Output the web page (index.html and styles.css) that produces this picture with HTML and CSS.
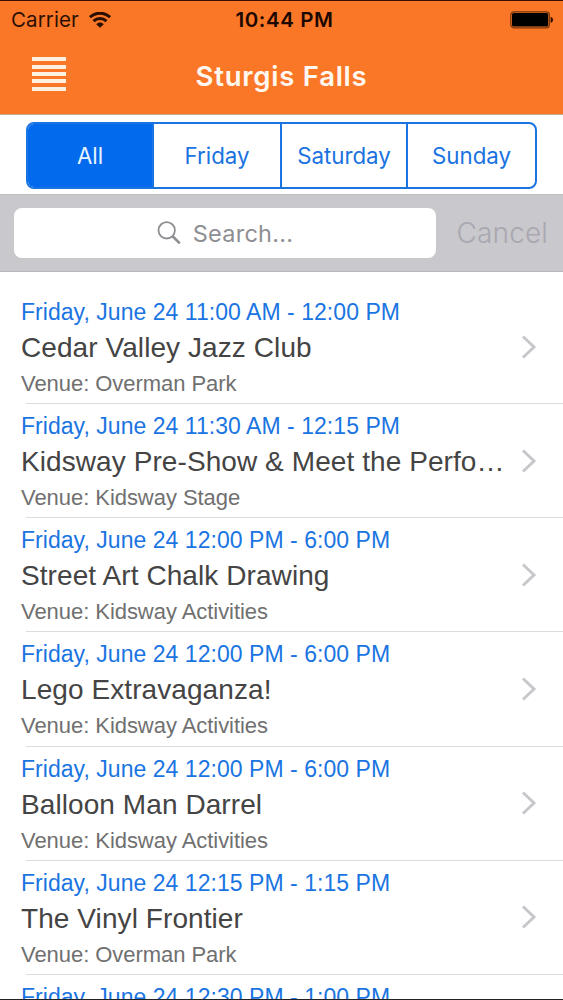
FILE: index.html
```html
<!DOCTYPE html>
<html lang="en">
<head>
    <meta charset="UTF-8">
    <meta name="viewport" content="width=device-width, initial-scale=1.0">
    <title>Sturgis Falls</title>
    <link rel="stylesheet" href="styles.css">
</head>
<body>
    <div class="screen">
        <header class="header">
            <div class="status-bar">
                <div class="carrier">
                    <span class="carrier-name">Carrier</span>
                    <svg class="wifi" width="22" height="16" viewBox="0 0 22 16" fill="none" stroke="#2b0f00" stroke-width="3">
                        <path d="M1 5.2C6.8 -0.2 15.2 -0.2 21 5.2"/>
                        <path d="M4.5 9.2C8.3 5.7 13.7 5.7 17.5 9.2"/>
                        <path d="M11 15.8L7.2 12.2C9.4 10 12.6 10 14.8 12.2Z" fill="#2b0f00" stroke="none"/>
                    </svg>
                </div>
                <span class="time">10:44 PM</span>
                <svg class="battery" width="44" height="18" viewBox="0 0 44 18">
                    <rect x="0.8" y="0.8" width="38.6" height="16" rx="3" fill="none" stroke="#7a3608" stroke-width="1.2"/>
                    <rect x="2" y="2" width="36.2" height="13.6" rx="1.5" fill="#000"/>
                    <path d="M40.6 6C43.8 6.2 43.8 11.6 40.6 11.8Z" fill="#2b0f00"/>
                </svg>
            </div>
            <div class="nav-bar">
                <button class="menu" aria-label="Menu">
                    <span></span><span></span><span></span><span></span><span></span>
                </button>
                <h1>Sturgis Falls</h1>
            </div>
        </header>

        <div class="tabs">
            <button class="tab active">All</button>
            <button class="tab">Friday</button>
            <button class="tab">Saturday</button>
            <button class="tab">Sunday</button>
        </div>

        <div class="search-bar">
            <div class="search-box">
                <svg width="24" height="24" viewBox="0 0 24 24" fill="none" stroke="#8e8e93">
                    <circle cx="9.7" cy="9.3" r="8.2" stroke-width="1.8"/>
                    <path d="M15.6 15.3L22.8 22.4" stroke-width="2.7"/>
                </svg>
                <span class="placeholder">Search...</span>
            </div>
            <span class="cancel">Cancel</span>
        </div>

        <ul class="events" id="events"></ul>
    </div>

    <script src="events.js"></script>
</body>
</html>
```
FILE: styles.css
```css
* {
    margin: 0;
    padding: 0;
    box-sizing: border-box;
}

body {
    background: #fff;
    font-family: Inter, "Liberation Sans", sans-serif;
}

button {
    background: none;
    border: none;
    font-family: inherit;
}

.screen {
    height: 1000px;
    overflow: hidden;
    border-top: 1px solid #3a0d05;
    border-bottom: 1px solid #222;
}

/* header */
.header {
    height: 114px;
    background: #fb7728;
    border-bottom: 1px solid #c9a48c;
}

.status-bar {
    display: grid;
    grid-template-columns: 1fr auto 1fr;
    align-items: center;
    height: 37px;
    padding: 0 9px 0 11px;
    color: #2b0f00;
}

.carrier {
    display: flex;
    align-items: center;
    gap: 10px;
}

.carrier-name {
    font-size: 20.5px;
    letter-spacing: 0.1px;
}

.time {
    font-size: 20.5px;
    font-weight: 600;
    letter-spacing: 0.6px;
    color: #1c0800;
    padding-left: 4px;
}

.battery {
    justify-self: end;
}

.nav-bar {
    display: grid;
    grid-template-columns: 66px 1fr 66px;
    align-items: center;
    height: 75px;
}

.menu {
    display: flex;
    flex-direction: column;
    gap: 3.3px;
    width: 34px;
    margin: -3px 0 0 32px;
}

.menu span {
    height: 4px;
    background: #fff1e2;
}

h1 {
    font-size: 27.5px;
    font-weight: 600;
    letter-spacing: 0.75px;
    color: #fff8f0;
    text-align: center;
}

/* day filter */
.tabs {
    display: grid;
    grid-template-columns: 124px 128px 126px 1fr;
    height: 67px;
    margin: 7px 26px 5px;
    border: 2px solid #1a75e2;
    border-radius: 8px;
    overflow: hidden;
}

.tab {
    font-size: 22.3px;
    color: #1a73e0;
    border-left: 2px solid #1a75e2;
}

.tab.active {
    background: #026aec;
    color: #e8f4ff;
    border-left: none;
}

/* search */
.search-bar {
    display: flex;
    align-items: center;
    height: 78px;
    padding: 0 15px 0 14px;
    background: #c9c8cd;
    border-top: 1px solid #c0bfc3;
    border-bottom: 1px solid #b9b8bc;
}

.search-box {
    display: flex;
    align-items: center;
    justify-content: center;
    gap: 12px;
    width: 422px;
    height: 50px;
    background: #fff;
    border-radius: 8px;
}

.placeholder {
    font-size: 23.5px;
    letter-spacing: 0.25px;
    color: #8e8e93;
}

.cancel {
    margin-left: auto;
    font-size: 28px;
    font-weight: 300;
    letter-spacing: 0.15px;
    color: #a9a7b0;
}

/* event list */
.events {
    list-style: none;
    margin-top: 18px;
    font-family: "Liberation Sans", Arial, sans-serif;
}

.event {
    display: grid;
    grid-template-columns: 1fr 16px;
    align-items: center;
    height: 114.15px;
    margin-left: 26px;
    padding-right: 26px;
    border-bottom: 1.5px solid #dcdcde;
}

.event-info {
    width: 486px;
    margin-left: -5px;
    padding-top: 3px;
}

.event-date,
.event-title,
.event-venue {
    display: block;
    white-space: nowrap;
}

.event-date {
    font-size: 23px;
    line-height: 34px;
    letter-spacing: 0.04px;
    color: #1a75e2;
}

.event-title {
    font-size: 28px;
    line-height: 38px;
    letter-spacing: 0.08px;
    color: #444;
    overflow: hidden;
    text-overflow: ellipsis;
}

.event-venue {
    font-size: 22px;
    line-height: 34px;
    letter-spacing: -0.05px;
    color: #707070;
}
```
FILE: events.js
```javascript
const events = [
    { date: "Friday, June 24 11:00 AM - 12:00 PM", title: "Cedar Valley Jazz Club", venue: "Overman Park" },
    { date: "Friday, June 24 11:30 AM - 12:15 PM", title: "Kidsway Pre-Show & Meet the Perfo…", venue: "Kidsway Stage" },
    { date: "Friday, June 24 12:00 PM - 6:00 PM", title: "Street Art Chalk Drawing", venue: "Kidsway Activities" },
    { date: "Friday, June 24 12:00 PM - 6:00 PM", title: "Lego Extravaganza!", venue: "Kidsway Activities" },
    { date: "Friday, June 24 12:00 PM - 6:00 PM", title: "Balloon Man Darrel", venue: "Kidsway Activities" },
    { date: "Friday, June 24 12:15 PM - 1:15 PM", title: "The Vinyl Frontier", venue: "Overman Park" },
    { date: "Friday, June 24 12:30 PM - 1:00 PM", title: "", venue: "" }
];

const list = document.getElementById("events");

events.forEach((event) => {
    const item = document.createElement("li");
    item.className = "event";
    item.innerHTML = `
        <div class="event-info">
            <span class="event-date">${event.date}</span>
            <span class="event-title">${event.title.replace("&", "&amp;") || "&nbsp;"}</span>
            <span class="event-venue">${event.venue ? "Venue: " + event.venue : "&nbsp;"}</span>
        </div>
        <svg width="16" height="24" viewBox="0 0 16 24" fill="none" stroke="#c7c7cc" stroke-width="3">
            <path d="M2 1.5L13 12L2 22.5"/>
        </svg>`;
    list.appendChild(item);
});
```
